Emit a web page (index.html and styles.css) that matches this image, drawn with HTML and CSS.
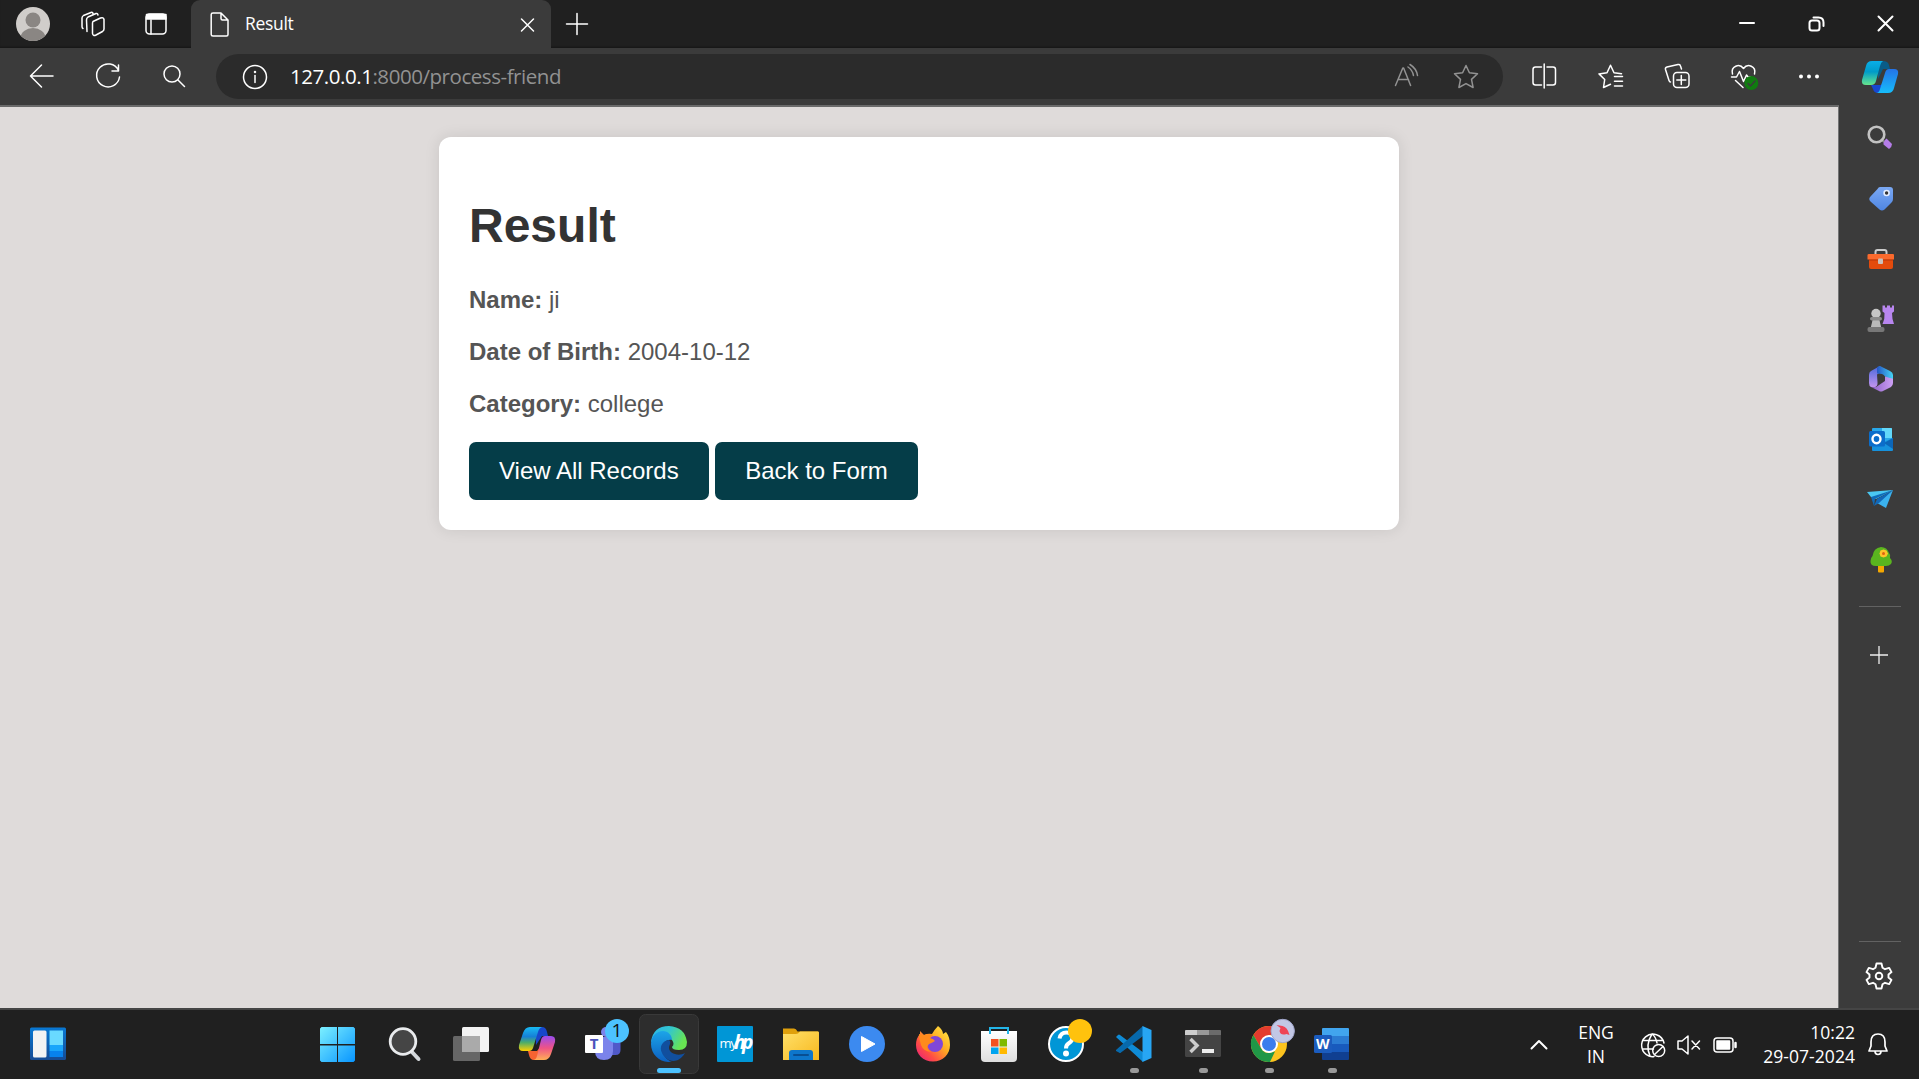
FILE: index.html
```html
<!DOCTYPE html>
<html lang="en">
<head>
<meta charset="utf-8">
<title>Result</title>
<link rel="stylesheet" href="styles.css">
</head>
<body>
<header class="titlebar">
  <div class="title-tools">
    <svg width="66" height="48"><defs><clipPath id="av"><circle cx="33" cy="24" r="17"/></clipPath></defs><circle cx="33" cy="24" r="17" fill="#d0cdca"/><g clip-path="url(#av)" fill="#8a8683"><circle cx="33" cy="20" r="7.5"/><ellipse cx="33" cy="38" rx="12.5" ry="10"/></g></svg>
    <svg class="line" width="54" height="48"><path d="M27 21.500l7.500-3.500q3-1 3.500 1.500v9.500q0 1.500-1.500 2.500l-6.500 3.500q-3 1.500-3.500-1.500v-10q0-1.500 .5-2zM21 31.500l-.5-11.500q0-2 1.500-3l8-3.500q1.500-.5 2 1.500M17 28.500q-1-.5-1-2V18q0-1.500 1.500-2.500l7.500-3q1.500-.5 2 1"/></svg>
    <svg class="line" width="71" height="48"><rect x="26" y="14" width="20" height="20" rx="3.500"/><path d="M26.500 14.500H46v4.500H26.500z" fill="#fff"/><path d="M31 20v14"/></svg>
  </div>
  <div class="tab">
    <svg class="line" width="20" height="26"><path d="M3 1h8l7 7v14.500q0 1.500-1.500 1.500H3q-1.800 0-1.800-1.500V2.500Q1.200 1 3 1zM11 1v5.500q0 1.500 1.500 1.500H18"/></svg>
    <span class="tab-title">Result</span>
    <svg class="line tab-close" width="14" height="14"><path d="M1.500 1l12 12M13.500 1l-12 12"/></svg>
  </div>
  <svg class="line new-tab" width="22" height="22"><path d="M11 .5v21M.5 11h21"/></svg>
  <div class="window-buttons">
    <svg class="line bold" width="69" height="48"><path d="M28 23h14"/></svg>
    <svg class="line bold" width="69" height="48"><rect x="28.500" y="20.500" width="10" height="10" rx="2.500"/><path d="M32.500 17.500h5q5 0 5 5v3.500"/></svg>
    <svg class="line bold" width="69" height="48"><path d="M28.500 16.500l14 14M42.500 16.500l-14 14"/></svg>
  </div>
</header>

<nav class="toolbar">
  <svg class="line" width="66" height="57"><path d="M44 28H21.500M32.500 17L21.500 28l11 11"/></svg>
  <svg class="line" width="66" height="57"><path d="M43.500 22.500A11.500 11.500 0 1 0 44.500 29M43.500 17v6h-6.500"/></svg>
  <svg class="line" width="66" height="57"><circle cx="31" cy="26" r="8"/><path d="M37 32l6.500 6.500"/></svg>
  <div class="address">
    <svg class="line" width="26" height="26"><circle cx="13" cy="13" r="11.500"/><path d="M13 11.500v7"/><circle cx="13" cy="8" r=".5"/></svg>
    <span class="url"><b>127.0.0.1</b>:8000/process-friend</span>
    <svg class="line dim" width="60" height="45"><path d="M20.500 31.500L27.800 14h.8l7 17.500M23 25.500h10.500M33 13q4.500 3 5.500 8.500M35 10.500q6.500 4 7.500 11"/></svg>
    <svg class="line dim" width="60" height="45"><path d="M31 11.500l3.400 7.300 8.100 1-6 5.600 1.600 8.100L31 29.600l-7.100 3.900 1.600-8.100-6-5.600 8.100-1z"/></svg>
  </div>
  <div class="tools">
    <svg class="line" width="66" height="57"><path d="M30.500 19h-6q-2.500 0-2.500 2.500v13q0 2.500 2.500 2.500h6M36 19h6q2.500 0 2.500 2.500v13q0 2.500-2.500 2.500h-6M33.200 16v24"/></svg>
    <svg class="line" width="66" height="57"><path d="M33.500 36.200l-7 3.300 1.200-8-5.700-5.600 8-1.200 3.500-7.400 3.500 7.400 7.500 1M37.500 28.500h8M37.500 33.300h8M37.500 38h8"/></svg>
    <svg class="line" width="66" height="57"><rect x="30.500" y="24.500" width="15.500" height="15" rx="3.500"/><path d="M38.300 27.500v9M33.800 32h9M27.500 34q-1 0-1.500-1.500l-3.500-11q-.5-2 1.500-2.500l11-2.500q2-.5 2.500 1.500l1 3"/></svg>
    <svg class="line" width="66" height="57"><path d="M23.500 26c-2-8 7-11 11-5.500 4-5.500 13-2.500 11 5.500M22.500 29h5l3-5.500 4 10 3-6.500 1.500 2h2.500M26.500 32.500l7.500 7"/><circle cx="42.300" cy="35" r="7" fill="#107c10" stroke="none"/><path d="M39 35.500l2.500 2.500 4.500-5" stroke="#3b3b3b"/></svg>
    <svg width="66" height="57" fill="#fff"><circle cx="26" cy="28.500" r="2"/><circle cx="34" cy="28.500" r="2"/><circle cx="42" cy="28.500" r="2"/></svg>
    <svg width="78" height="57" viewBox="-1 0 78 57"><defs><linearGradient id="ca" x2="0" y2="1"><stop stop-color="#09aee8"/><stop offset=".45" stop-color="#009bc9"/><stop offset="1" stop-color="#66e58d"/></linearGradient><linearGradient id="cb" x2="0" y2="1"><stop stop-color="#2473e8"/><stop offset="1" stop-color="#16bdfa"/></linearGradient></defs><path d="M36 13h5q5 0 6 4l1 4h-7l-5 10z" fill="#095c88"/><path d="M29 37h10l5-9 2 17H36q-4 0-5-4z" fill="#1748d1"/><path d="M30 13h11q-2 1-3 5l-4 15q-1 4-5 4h-5q-5 0-4-5l4-14q1-5 6-5z" fill="url(#ca)"/><path d="M47 21h5q5 0 4 5l-4 14q-1 5-6 5H34q3 0 4-4l5-16q1-4 4-4z" fill="url(#cb)"/></svg>
  </div>
</nav>

<div class="workspace">
  <main class="page">
    <section class="container">
      <h1>Result</h1>
      <p><strong>Name:</strong> ji</p>
      <p><strong>Date of Birth:</strong> 2004-10-12</p>
      <p><strong>Category:</strong> college</p>
      <div class="actions"><a class="btn">View All Records</a><a class="btn">Back to Form</a></div>
    </section>
  </main>
  <aside class="sidebar">
    <svg width="80" height="60"><path d="M44.500 33.500l3-3 5.500 5.500q0 3-3 5l-5.500-4.500z" fill="#b57de8"/><path d="M42 31l3 3" stroke="#888" stroke-width="2"/><circle cx="37.500" cy="26.500" r="7.800" fill="none" stroke="#c2c2c2" stroke-width="2.600"/></svg>
    <svg width="80" height="60"><defs><linearGradient id="tg" x2="0" y2="1"><stop stop-color="#7ba9f4"/><stop offset="1" stop-color="#4f86e2"/></linearGradient></defs><path d="M41 19h10q3 0 3 3v9q0 2-1.500 3.500l-7 7q-2.500 2-5 0l-9-8q-2.500-2.500 0-5l7-7.500Q39.500 19 41 19z" fill="url(#tg)"/><circle cx="47.600" cy="25" r="2.500" fill="#333" stroke="#e4edff" stroke-width="1.600"/></svg>
    <svg width="80" height="60"><path d="M36.500 27v-3q0-2 2-2h7q2 0 2 2v3" fill="none" stroke="#ccc" stroke-width="2"/><path d="M30 31h24v8q0 2-2 2H32q-2 0-2-2z" fill="#e44b0c"/><path d="M30 26h24q1 0 1 1v4.500H28.500V27q0-1 1.500-1z" fill="#fb6a2d"/><path d="M30 32h24" stroke="#b5370a"/><rect x="39" y="30.500" width="5" height="5.500" rx="1" fill="#c9c0bb"/></svg>
    <svg width="80" height="60"><path d="M43.500 17.500h2.500v2h2v-2h3v2h2v-2h2v6l-2 1.500q0 6 2 11H43.500q2.500-5 2-11l-2-1.500z" fill="#b886ef"/><path d="M34 30h6l3 13H31z" fill="#b9b9b9"/><circle cx="37" cy="25.500" r="4.700" fill="#c6c6c6"/><rect x="31" y="29" width="12" height="3.500" rx="1.700" fill="#8b8b8b"/><rect x="28.500" y="39" width="17" height="5" rx="2" fill="#777"/></svg>
    <svg width="80" height="60"><defs><linearGradient id="m1" x2="0" y2="1"><stop stop-color="#4a69dd"/><stop offset="1" stop-color="#c495ee"/></linearGradient><linearGradient id="m2" x2="1"><stop stop-color="#2456c5"/><stop offset="1" stop-color="#45d4f5"/></linearGradient><linearGradient id="m3" x2="1"><stop stop-color="#8c5fc5"/><stop offset="1" stop-color="#cda0f4"/></linearGradient></defs><path d="M41 18l-9 5q-2 1-2 4v8q0 3 2 4l3 .5q4-1 3.500-5l-.5-8 5-3.500z" fill="url(#m1)"/><path d="M41 18l10 5q3 1.500 3 4v7l-8-5.500q-1-2-3-2.500l-5-.500v-6q0-1 3-1.500z" fill="url(#m2)"/><path d="M54 31v4q0 2.500-2 4l-8 4q-2 1-4 0l-8-4q5 1 8-2l6-4v-4.500l5 1.500q3 .5 3 1z" fill="url(#m3)"/></svg>
    <svg width="80" height="60"><path d="M34 20h18q1 0 1 1v14H33V21q0-1 1-1z" fill="#28a8ea"/><path d="M43 20h9q1 0 1 1v9H43z" fill="#62d8fa"/><path d="M33 31l9 4 12-5v12q0 1-1 1H34q-1 0-1-1z" fill="#1691dc"/><path d="M54 30v11l-9-6z" fill="#0c66b8"/><rect x="30" y="23" width="16" height="15.500" rx="1.500" fill="#0b6dca"/><ellipse cx="37.500" cy="31" rx="4" ry="4.200" fill="none" stroke="#fff" stroke-width="2.400"/></svg>
    <svg width="80" height="60"><path d="M28 24l26-2-17 9-5-2z" fill="#4ac8f2"/><path d="M54 22L36 31l-1 7-3-9z" fill="#106bb8"/><path d="M54 22l-7 18-9-5z" fill="#3bb2ee"/><path d="M35 38l3-7 16-9-14 13z" fill="#1268b8"/></svg>
    <svg width="80" height="60"><rect x="39" y="36" width="6" height="8.500" rx="1" fill="#f5a800"/><path d="M42 19q6 0 8 6 2 2 1 5 3 3 1 6-2 2-5 2H37q-6 0-5.500-5 0-3 2-5 1-8 8.500-9z" fill="#5ab51f"/><path d="M44.500 21.500l3 1 1.500 3-1.500 3-3 1-3-1-1-3 1-3z" fill="#ffc329"/><circle cx="44.500" cy="25.500" r="1.500" fill="#dc6412"/></svg>
    <div class="divider"></div>
    <svg width="80" height="60"><path d="M40 21v18M31 30h18" stroke="#eee" stroke-width="1.300"/></svg>
    <div class="divider divider-low"></div>
    <svg class="line" width="80" height="66" viewBox="0 1 80 66"><path d="M37.500 22.500h5l1 4.200 2.500 1.500 4.200-1.300 2.300 4.200-3 2.500v2.800l3 2.500-2.300 4.200-4.200-1.300-2.500 1.500-1 4.200h-5l-1-4.200-2.500-1.500-4.200 1.300-2.300-4.200 3-2.500v-2.800l-3-2.500 2.300-4.200 4.200 1.300 2.500-1.500z" stroke-width="1.900"/><circle cx="40" cy="35" r="3.300" stroke-width="1.900"/></svg>
  </aside>
</div>

<footer class="taskbar">
  <svg class="widgets" width="96" height="69"><defs><linearGradient id="wb" x2="0" y2="1"><stop stop-color="#0878d3"/><stop offset="1" stop-color="#164b94"/></linearGradient></defs><rect x="30" y="17.500" width="36" height="32.500" rx="1.500" fill="url(#wb)"/><rect x="33" y="20.500" width="13.500" height="27" rx="1.500" fill="#f3f3f3"/><path d="M49.500 20.500H63V35H49.500z" fill="#69daff"/><path d="M49.500 35H63v6H49.500z" fill="#18a5fb"/><path d="M49.500 41H63v6H49.500z" fill="#0782ee"/></svg>
  <div class="apps">
    <svg width="66" height="69"><defs><linearGradient id="wi" x2="1" y2="1"><stop stop-color="#7cf0ff"/><stop offset="1" stop-color="#0895ff"/></linearGradient></defs><path d="M17.500 17H33v17H16V18.500zM34 17h15.500l1.500 1.500V34H34zM16 35.500h17V52H17.500L16 50.500zM34 35.500h17v15L49.500 52H34z" fill="url(#wi)"/></svg>
    <svg width="66" height="69"><path d="M41.500 41.500l7 7.500" stroke="#d4d8dc" stroke-width="4" stroke-linecap="round"/><circle cx="33" cy="31.500" r="12.800" fill="#454545" stroke="#e9ebed" stroke-width="2.800"/></svg>
    <svg width="66" height="69"><rect x="26" y="17" width="27" height="25" rx="1.500" fill="#f3f3f3"/><rect x="17" y="26" width="27" height="25" rx="1.500" fill="#707070" fill-opacity=".88"/><path d="M26 26h18v16H26z" fill="#aaa"/></svg>
    <svg width="66" height="69"><defs><linearGradient id="p1" x2="0" y2="1"><stop stop-color="#18baf4"/><stop offset=".4" stop-color="#1680d6"/><stop offset=".65" stop-color="#4fad68"/><stop offset="1" stop-color="#ffd000"/></linearGradient><linearGradient id="p2" x2="0" y2="1"><stop stop-color="#984cf0"/><stop offset=".5" stop-color="#ef5386"/><stop offset="1" stop-color="#ffaf55"/></linearGradient></defs><path d="M34 17h6q4 0 5 5l1 4h-6l-6 9z" fill="#1747cb"/><path d="M26 41h9l7-9v18H32q-4 0-5-5z" fill="#f66331"/><path d="M28 17h12q-3 1-4 5l-5 16q-1 3-4 3h-6q-5 0-4-6l4-12q2-6 7-6z" fill="url(#p1)"/><path d="M43 26h6q5 0 4 6l-4 12q-2 6-7 6H31q3 0 4-4l4-16q1-4 4-4z" fill="url(#p2)"/></svg>
    <svg width="66" height="69"><circle cx="38" cy="22" r="5" fill="#7b83eb"/><path d="M42 28h10.500v12q0 5-5 5H42z" fill="#5059c9"/><path d="M27 27h18v14q0 9-9 9t-9-9z" fill="#7b83eb"/><rect x="17" y="25" width="18" height="18" rx="1" fill="#fff"/><text x="26" y="39" class="teams-t">T</text><circle cx="49" cy="21" r="12" fill="#4cc2ff"/><text x="49" y="27" class="badge">1</text></svg>
    <svg width="66" height="69"><defs><linearGradient id="e1" x2="1" y2=".4"><stop stop-color="#2bb4ec"/><stop offset=".5" stop-color="#32c6cf"/><stop offset="1" stop-color="#68e452"/></linearGradient><linearGradient id="e2" x2="0" y2="1"><stop stop-color="#1ca5e8"/><stop offset="1" stop-color="#0c5fc0"/></linearGradient></defs><rect x="5.500" y="4.500" width="59" height="59" rx="6" fill="#2d2d2d" stroke="#393939"/><path d="M17 32q2-16 18-16 16 1 18 16 0 8-8 8-7 0-7-3 3-3 0-7-4-5-10-3z" fill="url(#e1)"/><path d="M17 34c0-8 6-13 12-13 5 0 9 4 9 9-6-1-11 4-9 12 1 5 5 9 9 9.500C27 54 17 45 17 34z" fill="url(#e2)"/><path d="M35 30c-7 1-10 7-7 13 4 9 16 12 23 0-7 4-16 0-16-5 0-3 2-4 1-7z" fill="#114f9e"/><rect x="23" y="58" width="24" height="5" rx="2.500" fill="#4cc2ff"/></svg>
    <svg width="66" height="69"><rect x="17" y="16" width="36" height="36" rx="1" fill="#0096d6"/><text x="19.500" y="38" class="my">my</text><text x="34" y="39" class="hp">hp</text></svg>
    <svg width="66" height="69"><defs><linearGradient id="fo" x2="1" y2="1"><stop stop-color="#ffe069"/><stop offset="1" stop-color="#f7b81e"/></linearGradient></defs><path d="M17 18.500h11q2 0 3.500 3H52v8H17z" fill="#dfa00c"/><path d="M17 24h13q2 0 4-2.500h18q1 0 1 1V50H17z" fill="url(#fo)"/><path d="M23 50v-7q0-3 3-3h18q3 0 3 3v7z" fill="#0d76cb"/><path d="M28 45h14" stroke="#084e92" stroke-width="2" stroke-linecap="round"/></svg>
    <svg width="66" height="69"><circle cx="35" cy="34" r="18" fill="#3c8af0"/><path d="M29.500 26.500l13.500 7.500-13.500 7.500z" fill="#fff" stroke="#fff" stroke-linejoin="round"/></svg>
    <svg width="66" height="69"><defs><linearGradient id="ff" x1="1" x2="0" y2="1"><stop stop-color="#fff14a"/><stop offset=".4" stop-color="#ffab22"/><stop offset=".7" stop-color="#ff4d45"/><stop offset="1" stop-color="#e31587"/></linearGradient></defs><path d="M40 16q5 4 5 8l3-2q4 5 4 13c0 9-7 16.500-17 16.500S18 44 18 35q0-7 4-11v-3l4 4q4-2 8-1 3-5 6-8z" fill="url(#ff)"/><circle cx="37" cy="34" r="8" fill="#8047d8"/><path d="M21 24l5 1q5-2 9 0l-3 3q4 1 5 3-3 2-6 3-4 4 2 8-8-1-10-7-2-6-2-11z" fill="#ff8b1c"/></svg>
    <svg width="66" height="69"><defs><linearGradient id="st" x2="0" y2="1"><stop stop-color="#fff"/><stop offset="1" stop-color="#dedede"/></linearGradient></defs><path d="M17 21h36v27q0 4-4 4H21q-4 0-4-4z" fill="url(#st)"/><path d="M26 24v-6h18v6" fill="none" stroke="#23b5e8" stroke-width="2"/><path d="M27 29h7.500v7.500H27z" fill="#f25022"/><path d="M35.500 29H43v7.500h-7.500z" fill="#7fba00"/><path d="M27 37.500h7.500V44H27z" fill="#00a4ef"/><path d="M35.500 37.500H43V44h-7.500z" fill="#ffb900"/></svg>
    <svg width="66" height="69"><circle cx="36" cy="34" r="17" fill="#0096d6" stroke="#fff" stroke-width="2"/><path d="M29.500 28.500q1-6 7-6t6 5.500q0 3-4 5.500-2.500 1.500-2.500 5" fill="none" stroke="#fff" stroke-width="4"/><circle cx="36" cy="43.500" r="3" fill="#fff"/><circle cx="50" cy="21" r="12" fill="#ffc20d"/></svg>
    <svg width="66" height="69"><path d="M20 27l2-2q1-1 2 0l24 18-1 9z" fill="#0f8bd6"/><path d="M20 40l27-24v10L25 42.500q-1 1-2 0L20 41z" fill="#0769ac"/><path d="M46.500 16l9 4v28l-9 4z" fill="#27a6f4"/><rect class="dot" x="34" y="58" width="9" height="5" rx="2.500"/></svg>
    <svg width="66" height="69"><rect x="23" y="20" width="36" height="27" rx="1.500" fill="#444"/><path d="M23 25v-4q0-1 1-1h11v5z" fill="#ccc"/><path d="M35 20h12v5H35z" fill="#999"/><path d="M47 20h11q1 0 1 1v4H47z" fill="#6b6b6b"/><path d="M28.500 29l6.500 6.500-6.500 6.500" fill="none" stroke="#ccc" stroke-width="3.500"/><path d="M40 39h12v4H40z" fill="#eee"/><rect class="dot" x="37" y="58" width="9" height="5" rx="2.500"/></svg>
    <svg width="66" height="69"><circle cx="41" cy="34" r="18" fill="#fcc31e"/><path d="M25.400 25A18 18 0 0 1 56.600 25H41l-7.800 13.500z" fill="#e33b2e"/><path d="M25.400 25l7.800 13.500q3 5 7.800 4.500l6-1.500-5 10.500A18 18 0 0 1 25.400 25z" fill="#209747"/><circle cx="41" cy="34" r="9" fill="#fff"/><circle cx="41" cy="34" r="7" fill="#3b7ded"/><circle cx="54.700" cy="21" r="11.700" fill="#c2c7e5" stroke="#9fa5ca"/><path d="M48.500 15l6 1q5 1 7 9l-3-1q-6 2-7-3l1-3z" fill="#ef4355"/><rect class="dot" x="37" y="58" width="9" height="5" rx="2.500"/></svg>
    <svg width="66" height="69"><path d="M28 26v-7q0-1 1-1h25q1 0 1 1v7z" fill="#41a5ee"/><path d="M28 26h27v8H28z" fill="#2b7cd3"/><path d="M28 34h27v8H28z" fill="#185abd"/><path d="M28 42h27v7q0 1-1 1H29q-1 0-1-1z" fill="#103f91"/><rect x="20" y="25" width="18" height="18" rx="1.500" fill="#1b5cbe"/><text x="28.800" y="38.500" class="word-w">W</text><rect class="dot" x="34" y="58" width="9" height="5" rx="2.500"/></svg>
  </div>
  <div class="tray">
    <svg class="line bold" width="18" height="12"><path d="M1.500 9.500L9 2l7.500 7.500"/></svg>
    <div class="lang">ENG<br>IN</div>
    <svg class="line status" width="98" height="26"><path d="M14 24.500q-2 .5-5-.5A11.300 11.300 0 1 1 24 11M10 24q-5-11 2-22M12 2q4 3 5 9M3 8.500h20M2.500 17h11"/><circle cx="18.700" cy="18.500" r="6"/><path d="M14.500 22.500l8.500-8"/><path d="M38 9h4l6-5v18l-6-5h-4zM52 9l7.500 8M59.500 9L52 17"/><rect x="74" y="6" width="19" height="14" rx="3"/><path d="M77 9h12.500v8H77z" fill="#fff"/><path d="M95.500 11v4" stroke-width="2.500"/></svg>
    <div class="clock">10:22<br>29-07-2024</div>
    <svg class="line" width="22" height="25"><path d="M11 2q-7 0-7 8v4l-2 5h18l-2-5v-4q0-8-7-8zM8 19q0 3.500 3 3.500t3-3.500" stroke-width="1.700"/></svg>
  </div>
</footer>
</body>
</html>
```
FILE: styles.css
```css
* { box-sizing: border-box; }
body {
  margin: 0;
  width: 1919px;
  height: 1079px;
  overflow: hidden;
  display: flex;
  flex-direction: column;
  background: #3b3b3b;
  color: #fff;
  font-family: "Open Sans", "Noto Sans", sans-serif;
}
svg { display: block; flex: none; overflow: visible; }
.line { fill: none; stroke: #fff; stroke-width: 1.5; stroke-linecap: round; stroke-linejoin: round; }
.bold { stroke-width: 2; }
.dim { stroke: #929292; }

.titlebar { flex: none; height: 48px; display: flex; align-items: center; background: #202020; box-shadow: inset 0 -2px 2px -1px #161616; }
.title-tools { display: flex; width: 191px; }
.tab { width: 360px; height: 48px; padding: 2px 17px 0 19px; display: flex; align-items: center; background: #3b3b3b; border-radius: 9px 9px 0 0; }
.tab-title { margin: -4px 0 0 15px; font-size: 17.500px; letter-spacing: -.3px; }
.tab-close { margin-left: auto; }
.new-tab { margin-left: 15px; }
.window-buttons { display: flex; margin-left: auto; }

.toolbar { flex: none; height: 57px; padding-left: 9px; display: flex; align-items: center; }
.address { width: 1287px; height: 45px; margin: 0 8px 0 9px; padding: 0 8px 0 26px; display: flex; align-items: center; background: #2b2b2b; border-radius: 23px; }
.url { margin: -1px auto 0 22px; font-size: 20.500px; letter-spacing: -.45px; color: #929292; }
.url b { color: #fff; font-weight: 400; }
.tools { display: flex; }

.workspace { flex: none; height: 903px; display: flex; }
.page { width: 1839px; padding-top: 30px; background: #dfdbda; border-top: 2px solid #6a6a6a; border-right: 1px solid #747474; font-family: Arial, "Liberation Sans", sans-serif; }
.container { width: 960px; height: 393px; margin: 0 auto; padding: 30px; background: #fff; border-radius: 12px; box-shadow: 0 0 15px rgba(0, 0, 0, .1); }
.container h1 { margin: 31px 0 33px; font-size: 48px; line-height: 55px; color: #333; }
.container p { margin: 0 0 24px; font-size: 24px; line-height: 28px; color: #555; }
.actions { display: flex; gap: 6px; }
.btn { padding: 15px 30px; font-size: 24px; line-height: 28px; color: #fff; background: #053d48; border-radius: 7px; }
.btn:last-child { padding: 15px 30.500px; }

.sidebar { width: 80px; padding-top: 3px; display: flex; flex-direction: column; }
.divider { flex: none; width: 42px; height: 1px; margin: 18px 0 18px 20px; background: #626262; }
.divider-low { margin: auto 0 0 20px; }

.taskbar { flex: none; height: 71px; display: flex; background: #202020; border-top: 2px solid #454545; }
.apps { display: flex; margin-left: 208px; }
.dot { fill: #999; }
.teams-t { font: bold 15px "Open Sans", sans-serif; text-anchor: middle; fill: #4b53bc; }
.badge { font: 19px "Open Sans", sans-serif; text-anchor: middle; fill: #111; }
.my { font: 13px "Open Sans", sans-serif; letter-spacing: -1px; fill: #fff; }
.hp { font: italic bold 19px "Open Sans", sans-serif; letter-spacing: -3.500px; fill: #fff; }
.word-w { font: bold 14px "Open Sans", sans-serif; text-anchor: middle; fill: #fff; }
.tray { display: flex; align-items: center; margin-left: auto; padding-right: 30px; font-size: 17.500px; line-height: 24px; }
.lang { width: 48px; margin: -1px 0 0 24px; text-align: center; }
.status { margin: 0 0 0 20px; }
.clock { width: 112px; margin: -1px 12px 0 5px; text-align: right; letter-spacing: .05px; }
```
